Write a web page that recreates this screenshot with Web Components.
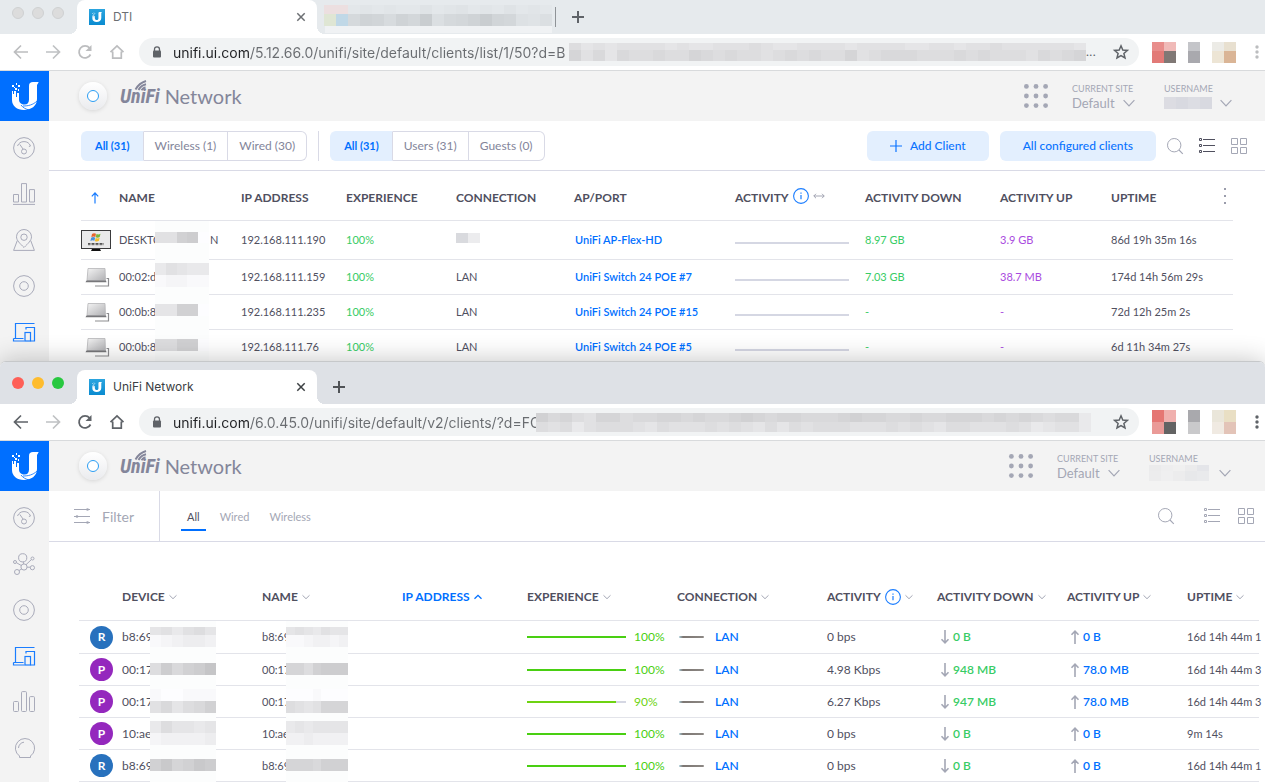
<!DOCTYPE html>
<html lang="en">
<head>
<meta charset="utf-8">
<meta name="viewport" content="width=device-width, initial-scale=1">
<title>UniFi Network</title>
<style>
  html { background: #fff; }
  body {
    margin: 0; min-height: 100vh; display: flex; flex-direction: column; overflow: hidden;
    font-family: Lato, "Open Sans", sans-serif; font-size: 12px; line-height: 16px; color: #50505f;
  }
  browser-window.front {
    flex: 1; margin-top: -4px; border-top: 1px solid #c6c8ca; border-radius: 6px 6px 0 0;
    box-shadow: 0 0 26px rgba(0, 0, 0, .24);
  }
</style>
</head>
<body>

<browser-window inactive tab-title="DTI" host="unifi.ui.com" path="/5.12.66.0/unifi/site/default/clients/list/1/50?d=B" ellipsis style="--url-width: 396px">
  <pixel-mosaic slot="tabs" style="--cell: 12px" heights="9,12,7"
    colors="#ecdfe0,#ecdfe0,#e3e7ea,#e1e5e8,#e3e7ea,#e1e5e8,#e3e7ea,#e3e7ea,#dfe3e6,#e3e7ea,#e1e5e8,#dfe3e6,#e3e7ea,#e1e5e8,#e3e7ea,#dfe3e6,#e3e7ea,#e1e5e8,#e3e7ea;#dfe6d4,#c0d8e7,#d5d9dc,#cfd3d6,#d1d5d8,#d7dbde,#cfd3d6,#d3d7da,#c9cdd0,#dbdfe2,#d5d9dc,#d3d7da,#cfd3d6,#c9cdd0,#d1d5d8,#d3d7da,#dde1e4,#dfe3e6,#dbdfe2;#f0f2f4,#f0f2f4,#f0f2f4,#f0f2f4,#f0f2f4,#f0f2f4,#f0f2f4,#f0f2f4,#f0f2f4,#f0f2f4,#f0f2f4,#f0f2f4,#f0f2f4,#f0f2f4,#f0f2f4,#f0f2f4,#f0f2f4,#f0f2f4,#f0f2f4"></pixel-mosaic>
  <pixel-mosaic slot="url" heights="7,11" shades="6878777787887776788777787777887787767777778;4758566566456566765656647655566656566675654"></pixel-mosaic>
  <pixel-mosaic slot="extensions" style="--cell: 12px" heights="9,12" colors="#e88d8b,#f0bab8;#e27a77,#807875"></pixel-mosaic>
  <pixel-mosaic slot="extensions" style="--cell: 12px" heights="9,12" colors="#c4c5c9;#a9a9ae"></pixel-mosaic>
  <pixel-mosaic slot="extensions" style="--cell: 12px" heights="9,12" colors="#ecebe6,#e8e0d0;#ede5d5,#dab596"></pixel-mosaic>

  <unifi-shell icons="gauge,chart,map,device,clients" current="clients">
    <pixel-mosaic slot="user" style="--cell: 12px" heights="12" colors="#dcdce2,#d8d9e0,#dcdde3,#d8d9e0"></pixel-mosaic>
    <classic-toolbar></classic-toolbar>
    <classic-table></classic-table>
  </unifi-shell>
</browser-window>

<browser-window class="front" tab-title="UniFi Network" host="unifi.ui.com" path="/6.0.45.0/unifi/site/default/v2/clients/?d=FC" style="--url-width: 363px">
  <pixel-mosaic slot="url" heights="9,10" shades="3546744655445455434544555434455455444545456559;6769766678677767678686766677767678667776798779"></pixel-mosaic>
  <pixel-mosaic slot="extensions" style="--cell: 12px" heights="12,12" colors="#e57673,#f0b0ae;#ea9a97,#636363"></pixel-mosaic>
  <pixel-mosaic slot="extensions" style="--cell: 12px" heights="12,12" colors="#a9a9ad;#c9c9cb"></pixel-mosaic>
  <pixel-mosaic slot="extensions" style="--cell: 12px" heights="12,12" colors="#eae6da,#e9dfc4;#f0eae2,#e3c4b8"></pixel-mosaic>

  <unifi-shell icons="gauge,topology,device,clients,bars,bulb" current="clients" style="--user-width: 82px">
    <pixel-mosaic slot="user" style="--cell: 12px" heights="6,10" colors="#ebebec,#eeeeef,#f0f0f0,#ebebec,#e4e5e9;#ececed,#efeff0,#ececed,#e7e8ea,#e9eaec"></pixel-mosaic>
    <modern-toolbar></modern-toolbar>
    <modern-table></modern-table>
  </unifi-shell>
</browser-window>

<script>
class ShadowElement extends HTMLElement {
  connectedCallback() {
    if (this.shadowRoot) return;
    this.attachShadow({ mode: "open" }).innerHTML = `<style>*{box-sizing:border-box}</style>` + this.render();
  }
}

const U_MARK = `<path d="M1 9v9c0 6 5 10 12 10s13-4 13-11V3l1.500-2.500V0H22c-2.500 0-4 1-4 4v13.500c0 3-1.500 5-4.500 5S8 21 8 17.500V11H6v4H5V9H3v3H2V9z"/><path d="M1 3h2v2H1zM4 6h2v2H4zM5 1h1v2H5zM7 3h2v2H7zM3 5h1v1H3zM7 7h1v2H7z"/>`;

const ICONS = {
  back: [16, `<path d="M15 8H2M8 1.500L1.500 8 8 14.500" stroke-width="1.700"/>`],
  forward: [16, `<path d="M1 8h13M8 1.500L14.500 8 8 14.500" stroke-width="1.700"/>`],
  reload: [16, `<path d="M13.500 10.500A6 6 0 1 1 12.600 4" stroke-width="1.800"/><path d="M14.500 1v6h-6z" fill="currentColor" stroke="none"/>`],
  home: [16, `<path d="M1.500 8.200L8 2l6.500 6.200M3.700 7.500v6.700h8.600V7.500" stroke-width="1.700"/>`],
  star: [16, `<path d="M8 1.800l1.800 4.200 4.600.4-3.500 3 1.100 4.500L8 11.500 4 13.900l1.100-4.500-3.500-3 4.600-.4z" stroke-width="1.500"/>`],
  lock: [12, `<path d="M3.500 5V3.400a2.500 2.500 0 0 1 5 0V5" stroke-width="1.300"/><rect x="2" y="4.600" width="8" height="6.900" rx="1" fill="currentColor" stroke="none"/>`],
  close: [10, `<path d="M1.300 1.300l7.400 7.400M8.700 1.300L1.300 8.700" stroke-width="1.500"/>`],
  plus: [12, `<path d="M6 0v12M0 6h12" stroke-width="2"/>`],
  plusthin: [12, `<path d="M6 0v12M0 6h12" stroke-width="1.200"/>`],
  more: [16, `<g fill="currentColor" stroke="none"><circle cx="8" cy="3" r="1.700"/><circle cx="8" cy="8" r="1.700"/><circle cx="8" cy="13" r="1.700"/></g>`],
  dots: [16, `<g fill="currentColor" stroke="none"><rect x="7" y="0" width="2" height="2"/><rect x="7" y="7" width="2" height="2"/><rect x="7" y="14" width="2" height="2"/></g>`],
  u: [28, `<g fill="currentColor" stroke="none">${U_MARK}</g><path d="M10 23c2 3 5 4 8 5M26 19c-4 4-9 5-14 5" stroke="#006fff" stroke-width=".8"/>`],
  apps: [24, `<g fill="currentColor" stroke="none">${[2.4, 12, 21.600].map(y => [2.4, 12, 21.600].map(x => `<circle cx="${x}" cy="${y}" r="2.400"/>`).join("")).join("")}</g>`],
  gauge: [22, `<circle cx="11" cy="11" r="10.400"/><circle cx="11" cy="14.500" r="2.500"/><path d="M10 12L6.800 7.400M4.500 9a7 7 0 0 1 13 0l-1.600.5"/>`],
  chart: [22, `<path d="M.5 19V11.500h5V19zM8.500 19V.6h5V19zM16.500 19V6.600h5V19zM0 21.400h22"/>`],
  bars: [22, `<rect x=".5" y="10.500" width="5" height="10" rx="1"/><rect x="8.500" y=".6" width="5" height="19.900" rx="1"/><rect x="16.500" y="5.600" width="5" height="14.900" rx="1"/>`],
  map: [22, `<path d="M11 18.500C7 14.500 3.500 11.500 3.500 7.800a7.500 7.300 0 0 1 15 0c0 3.700-3.500 6.700-7.500 10.700zM4.300 11.500L.6 21.400h20.800l-3.700-9.900"/><circle cx="11" cy="8.200" r="3.200"/>`],
  device: [22, `<circle cx="11" cy="11" r="10.400"/><circle cx="11" cy="11" r="4.300"/>`],
  clients: [22, `<path d="M2.500 17V2.500h19M.5 17.500h10M.5 17.500v2.500h11M13 8.500V6.500h8.500V20h-4" stroke-width="1.200"/><rect x="12" y="11.500" width="5.500" height="8.500" stroke-width="1.200"/>`],
  topology: [22, `<circle cx="9.700" cy="4.800" r="4.100"/><circle cx="11" cy="14" r="3.100"/><circle cx="2" cy="9" r="1.500"/><circle cx="19.500" cy="5.500" r="1.500"/><circle cx="19.400" cy="14.700" r="2.100"/><circle cx="4" cy="19" r="2.500"/><path d="M3.400 9.700L8.300 12.500M18.400 6.600L13 11.700M14.100 14.200h3.200M8.700 16L6 17.500M10.200 8.900l.4 2"/>`],
  bulb: [22, `<path d="M6.500 19a9.600 9.600 0 1 1 11 0v1.500h-11zM5.500 11a6 6 0 0 1 5.500-5.800"/>`],
  chevron: [12, `<path d="M.6 3.200L6 8.800l5.400-5.600" stroke-width="1.200"/>`],
  down: [8, `<path d="M.5 2.300L4 5.700l3.500-3.400"/>`],
  up: [8, `<path d="M.5 5.700L4 2.300l3.500 3.400" stroke-width="1.300"/>`],
  search: [16, `<circle cx="7.200" cy="7.200" r="6.700" stroke-width="1"/><path d="M12 12l3.800 3.800" stroke-width="1.100"/>`],
  list: [16, `<path d="M4 1.500h12M4 7.500h12M4 13.500h12M.5.5h2v2h-2zM.5 6.500h2v2h-2zM.5 12.500h2v2h-2z"/>`],
  grid: [16, `<path d="M.5.5h6v6h-6zM9.500.5h6v6h-6zM.5 9.500h6v6h-6zM9.500 9.500h6v6h-6z"/>`],
  filter: [16, `<path d="M0 1.500h16M0 8.500h16M0 14.500h16"/><g fill="currentColor" stroke="none"><circle cx="13.500" cy="1.500" r="1.300"/><circle cx="3" cy="8.500" r="1.300"/><circle cx="13.500" cy="14.500" r="1.300"/></g>`],
  info: [16, `<circle cx="8" cy="8" r="7.400" stroke-width="1.100"/><path d="M8 7v4.300M8 4.400v1.300" stroke-width="1.200"/>`],
  resize: [12, `<path d="M.8 6h10.400M3 3.800L.8 6 3 8.200M9 3.800L11.200 6 9 8.200" stroke-width=".9"/>`],
  sortup: [12, `<path d="M6 11.500V1M2.800 4.400L6 1l3.200 3.400" stroke-width="1.200"/>`],
  rise: [14, `<path d="M7 14V1.200M3.500 4.700L7 1.200l3.500 3.500" stroke-width="1.600"/>`],
  fall: [14, `<path d="M7 0v12.800M3.500 9.300L7 12.800l3.500-3.500" stroke-width="1.600"/>`],
  wifi: [16, `<path d="M3.500 9.500C6 5 9 2.500 14 1M6.500 10C8 7 10.500 5 14 4.200M9.500 10.200c1-1.700 2.400-2.700 4-3" stroke-width="1.900"/>`]
};

customElements.define("ui-icon", class extends ShadowElement {
  render() {
    const [size, body] = ICONS[this.getAttribute("name")];
    return `<style>
      :host { display: inline-flex; flex: none; width: ${size}px; height: ${size}px; }
      svg { width: 100%; height: 100%; fill: none; stroke: currentColor; overflow: visible; }
    </style><svg viewBox="0 0 ${size} ${size}" aria-hidden="true">${body}</svg>`;
  }
});

/* Blocks of flat colour that hide private text. */
customElements.define("pixel-mosaic", class extends ShadowElement {
  render() {
    const heights = (this.getAttribute("heights") || "12").split(",");
    const shades = this.getAttribute("shades");
    const rows = shades
      ? shades.split(";").map(r => [...r].map(c => { const v = 197 + parseInt(c, 16) * 4; return `rgb(${v},${v},${v + 2})`; }))
      : this.getAttribute("colors").split(";").map(r => r.split(","));
    return `<style>
      :host { display: flex; flex-direction: column; justify-content: center; flex: none; }
      div { display: flex; }
      i { flex: 1 0 var(--cell, 0px); }
    </style>` + rows.map((r, n) => `<div style="height:${heights[n]}px">${r.map(c => `<i style="background:${c}"></i>`).join("")}</div>`).join("");
  }
});

customElements.define("browser-window", class extends ShadowElement {
  render() {
    const a = n => this.getAttribute(n) || "";
    const dots = this.hasAttribute("ellipsis");
    return `<style>
      :host { display: flex; flex-direction: column; position: relative; overflow: clip; background: #fff;
        --strip: #dee1e6; --tool: #5f6368; --pale: #bfc1c3; --title: #3c4043; --edge: 8px;
        font-family: Inter, Roboto, sans-serif; }
      :host([inactive]) { --strip: #e6eaed; --tool: #bcbdbf; --title: #6c6f73; --edge: 0px; }
      .strip { display: flex; align-items: center; padding: var(--edge) 0 0 12px; background: var(--strip); color: var(--title); }
      .lights { display: flex; gap: 8px; align-self: flex-start; padding-top: 7px; }
      .lights button { width: 12px; height: 12px; padding: 0; border: 0; border-radius: 50%; }
      .close { background: #fe5f57; } .min { background: #febc2e; } .max { background: #28c840; }
      :host([inactive]) .lights button { background: #dcdcdc; border: 1px solid #cfd1d2; }
      .tab { position: relative; display: flex; align-items: center; gap: 8px; width: 240px; height: 34px; margin-left: 13px;
        padding: 0 11px 0 12px; border-radius: 8px 8px 0 0; background: #fff; font-size: 12px; }
      .tab::before, .tab::after { content: ""; position: absolute; bottom: 0; width: 8px; height: 8px; }
      .tab::before { right: 100%; background: radial-gradient(circle at 0 0, var(--strip) 8px, #fff 8px); }
      .tab::after { left: 100%; background: radial-gradient(circle at 100% 0, var(--strip) 8px, #fff 8px); }
      .tab span { flex: 1; }
      .fav { width: 16px; height: 16px; display: grid; place-items: center; background: linear-gradient(#2ba5df, #0a8bd0); color: #fff; }
      .fav svg { width: 10px; height: 10px; fill: currentColor; }
      button { border: 0; padding: 0; background: none; color: inherit; font: inherit; }
      .tab button, .add { display: grid; place-items: center; }
      .tab button { width: 10px; height: 10px; }
      .add { width: 12px; height: 12px; margin-left: 16px; color: #505357; }
      :host([inactive]) .add { color: #5f6368; }
      ::slotted([slot="tabs"]) { height: 28px; margin: 5px 0 1px 7px; }
      .rule { display: none; width: 1px; height: 20px; margin-left: 3px; background: #8f9397; }
      :host([inactive]) .rule { display: block; }
      .bar { display: flex; align-items: center; height: 37px; padding-left: 5px; border-bottom: 1px solid #d8dadc; color: var(--tool); }
      .bar > button { width: 32px; height: 32px; display: grid; place-items: center; }
      .bar > .off { color: var(--pale); }
      .omni { flex: 1; min-width: 0; display: flex; align-items: center; height: 28px; margin: 0 13px 0 6px; padding: 0 10px 0 12px; border-radius: 14px; background: #f1f3f4; color: #5f6368; }
      input { width: var(--url-width); height: 20px; margin-left: 10px; padding: 0; border: 0; outline: 0; font: 14px Inter, Roboto, sans-serif; color: #5f6368;
        background: linear-gradient(90deg, #202124 78px, #696c70 78px); -webkit-background-clip: text; background-clip: text; -webkit-text-fill-color: transparent; }
      .mask { flex: 1; min-width: 0; display: flex; align-items: center; }
      ::slotted([slot="url"]) { flex: 1; }
      .mask span { line-height: 18px; }
      .omni button { width: 16px; height: 16px; margin-left: 22px; }
      .mask.wide { margin-right: -5px; }
      .ext { display: flex; align-items: center; gap: 12px; }
      .bar > .menu { width: 16px; margin: 0 0 0 13px; }
    </style>
    <div class="strip">
      <div class="lights"><button class="close" aria-label="Close window"></button><button class="min" aria-label="Minimise"></button><button class="max" aria-label="Full screen"></button></div>
      <div class="tab"><i class="fav"><svg viewBox="0 0 28 28">${U_MARK}</svg></i><span>${a("tab-title")}</span><button aria-label="Close tab"><ui-icon name="close"></ui-icon></button></div>
      <slot name="tabs"></slot><i class="rule"></i>
      <button class="add" aria-label="New tab"><ui-icon name="plus"></ui-icon></button>
    </div>
    <div class="bar">
      <button aria-label="Back"><ui-icon name="back"></ui-icon></button>
      <button class="off" aria-label="Forward"><ui-icon name="forward"></ui-icon></button>
      <button aria-label="Reload"><ui-icon name="reload"></ui-icon></button>
      <button aria-label="Home"><ui-icon name="home"></ui-icon></button>
      <div class="omni"><ui-icon name="lock"></ui-icon>
        <input aria-label="Address" value="${a("host")}${a("path")}">
        <div class="mask${dots ? " wide" : ""}"><slot name="url"></slot>${dots ? "<span>...</span>" : ""}</div>
        <button aria-label="Bookmark"><ui-icon name="star"></ui-icon></button></div>
      <div class="ext"><slot name="extensions"></slot></div>
      <button class="menu" aria-label="Menu"><ui-icon name="more"></ui-icon></button>
    </div>
    <slot></slot>`;
  }
});

customElements.define("unifi-shell", class extends ShadowElement {
  render() {
    const current = this.getAttribute("current");
    const nav = this.getAttribute("icons").split(",").map(n =>
      `<a href="#${n}" aria-label="${n}" ${n === current ? 'class="on"' : ""}><ui-icon name="${n}"></ui-icon></a>`).join("");
    return `<style>
      :host { flex: 1; display: grid; grid-template: 50px 1fr / 49px minmax(0, 1fr); font-family: Lato, sans-serif; color: #50505f; }
      .logo { display: grid; place-items: center; background: #006fff; color: #fff; }
      header { display: flex; align-items: center; padding: 0 34px 0 30px; background: #f3f3f3; }
      .badge { width: 28px; height: 28px; display: grid; place-items: center; border-radius: 50%; background: linear-gradient(#fff, #eaebee); box-shadow: 0 1px 4px rgba(0,0,0,.12); }
      .badge i { width: 12px; height: 12px; border: 1px solid #2a9df4; border-radius: 50%; background: #fff; }
      h1 { position: relative; display: flex; align-items: center; gap: 5px; margin: 0 auto 0 13px; font-weight: 400; font-size: 20px; line-height: 28px; color: #84869a; }
      h1 b { font: italic 700 20px/28px "Liberation Sans Narrow", "Roboto Condensed", Lato, sans-serif; }
      h1 ui-icon { position: absolute; left: 12px; top: -2px; }
      .apps { display: grid; width: 24px; height: 24px; margin-right: 24px; padding: 0; border: 0; background: none; color: #a4a7b5; }
      .menu { display: flex; flex-direction: column; color: #a4a7b5; font-size: 13px; line-height: 16px; }
      .menu > label, .menu > span { font-size: 9px; line-height: 13px; }
      select { appearance: none; height: 16px; margin: 0; padding: 0 20px 0 0; border: 0; font: inherit; line-height: 16px; color: inherit;
        background: url("data:image/svg+xml,%3Csvg xmlns='http://www.w3.org/2000/svg' width='12' height='12' fill='none' stroke='%23a4a7b5' stroke-width='1.2'%3E%3Cpath d='M.6 3.200L6 8.800l5.400-5.600'/%3E%3C/svg%3E") no-repeat right center; }
      .user { display: flex; align-items: center; justify-content: space-between; gap: 8px; width: var(--user-width, 67px); height: 16px; padding: 0; border: 0; background: none; color: inherit; }
      .account { margin-left: 29px; }
      nav { display: flex; flex-direction: column; padding-top: 4px; background: #f3f3f3; }
      nav a { display: grid; place-items: center; height: 46px; padding-right: 1px; color: #a9abba; }
      nav a.on { color: #1a7dff; }
      main { min-width: 0; background: #fff; }
    </style>
    <a class="logo" href="#home" aria-label="Ubiquiti"><ui-icon name="u"></ui-icon></a>
    <header>
      <span class="badge"><i></i></span>
      <h1><b>UniFi</b><ui-icon name="wifi"></ui-icon><span>Network</span></h1>
      <button class="apps" aria-label="Apps"><ui-icon name="apps"></ui-icon></button>
      <div class="menu"><label for="site">CURRENT SITE</label><select id="site"><option>Default</option></select></div>
      <div class="menu account"><span id="who">USERNAME</span><button class="user" aria-labelledby="who"><slot name="user"></slot><ui-icon name="chevron"></ui-icon></button></div>
    </header>
    <nav>${nav}</nav>
    <main><slot></slot></main>`;
  }
});

/* A joined row of choices; one is pressed. */
customElements.define("segment-group", class extends ShadowElement {
  render() {
    const items = this.getAttribute("items").split("|");
    return `<style>
      :host { display: inline-flex; }
      button { height: 30px; padding: 0 11px; border: 1px solid #d9dae6; border-left-width: 0; background: #fff; font: 12px Lato, sans-serif; color: #83859a; }
      button:first-of-type { border-color: #e3effe; border-right-color: #d9dae6; border-left-width: 1px; border-radius: 6px 0 0 6px; background: #e3effe; font-size: 11px; font-weight: 700; padding: 0 13px; color: #006fff; }
      button:last-of-type { border-radius: 0 6px 6px 0; }
    </style>` + items.map((t, i) => `<button aria-pressed="${i === 0}">${t}</button>`).join("");
  }
});

customElements.define("classic-toolbar", class extends ShadowElement {
  render() {
    return `<style>
      :host { display: flex; align-items: center; height: 49px; padding: 0 18px 0 32px; border-bottom: 1px solid #d9dae6; }
      .rule { width: 1px; height: 30px; margin: 0 11px; background: #d9dae6; }
      .space { flex: 1; }
      .cta { display: flex; align-items: center; gap: 8px; height: 30px; margin-right: 11px; padding: 0 23px; border: 0; border-radius: 6px; background: #e3effe; font: 500 12px Lato, sans-serif; color: #0a73ff; }
      .tool { padding: 0; border: 0; background: none; height: 16px; color: #a4a7b5; }
      .tool + .tool { margin-left: 16px; }
      .on { color: #50505f; }
    </style>
    <segment-group items="All (31)|Wireless (1)|Wired (30)"></segment-group><i class="rule"></i>
    <segment-group items="All (31)|Users (31)|Guests (0)"></segment-group><span class="space"></span>
    <button class="cta"><ui-icon name="plusthin"></ui-icon>Add Client</button>
    <button class="cta">All configured clients</button>
    <button class="tool" aria-label="Search"><ui-icon name="search"></ui-icon></button>
    <button class="tool on" aria-label="List"><ui-icon name="list"></ui-icon></button>
    <button class="tool" aria-label="Grid"><ui-icon name="grid"></ui-icon></button>`;
  }
});

customElements.define("modern-toolbar", class extends ShadowElement {
  render() {
    return `<style>
      :host { display: flex; align-items: center; height: 50px; padding-right: 11px; border-bottom: 1px solid #d9dae6; }
      button { padding: 0; border: 0; background: none; font: 11px Lato, sans-serif; color: #a4a7b5; }
      .filter { display: flex; align-items: center; gap: 12px; width: 111px; height: 50px; padding-left: 25px; border-right: 1px solid #d9dae6; font-size: 14px; }
      .tabs { display: flex; flex: 1; gap: 8px; margin-left: 21px; }
      .tabs button { height: 28px; padding: 0 6px; border-bottom: 2px solid transparent; margin-top: 2px; }
      .tabs .on { border-color: #006fff; color: #50505f; }
      .tool { height: 16px; margin-left: 18px; }
      .search { margin-right: 12px; }
    </style>
    <button class="filter"><ui-icon name="filter"></ui-icon>Filter</button>
    <div class="tabs"><button class="on">All</button><button>Wired</button><button>Wireless</button></div>
    <button class="tool search" aria-label="Search"><ui-icon name="search"></ui-icon></button>
    <button class="tool" aria-label="List"><ui-icon name="list"></ui-icon></button>
    <button class="tool" aria-label="Grid"><ui-icon name="grid"></ui-icon></button>`;
  }
});

/* Small picture of the kind of machine behind a client. */
customElements.define("machine-picture", class extends ShadowElement {
  render() {
    const pc = `<rect x=".5" y=".5" width="29" height="18" fill="#e9e9ea" stroke="#3a3a3c"/><path d="M11 19h8l1 2H10z" fill="#111"/>
      <path d="M11 4q2-1.500 4-.2L14.300 7q-2-1-4 .2z" fill="#e8642c"/><path d="M15.500 4q2 1 4-.2L18.700 7q-2 1.200-4 .2z" fill="#79b63b"/><path d="M10.200 7.700q2-1.200 4 0l-.8 3.100q-2-1-4 .2z" fill="#4a90d9"/><path d="M14.700 8q2 1 4-.2l-.8 3q-2 1.300-4 .2z" fill="#f5bd2b"/><path d="M7 13.500h16M7 14.700h16" stroke="#555" stroke-width="1" stroke-dasharray="2 .5 1 .5"/>`;
    const laptop = `<defs><linearGradient id="s" x2="1" y2="1"><stop stop-color="#f4f4f4"/><stop offset="1" stop-color="#b0b0b3"/></linearGradient></defs>
      <path d="M7 1.500h17l.5 12H6z" fill="url(#s)" stroke="#b5b5b8" stroke-width=".8"/><path d="M5.500 13.500H25l.5 1.800H4.500z" fill="#77777a"/><path d="M25.500 11.500h2v7.500H14" fill="none" stroke="#8d8d90" stroke-width="1.200"/>`;
    return `<style>:host { display: block; width: 30px; height: 21px; } svg { display: block; width: 30px; height: 21px; }</style>
      <svg viewBox="0 0 30 21" aria-hidden="true">${this.getAttribute("kind") === "pc" ? pc : laptop}</svg>`;
  }
});

const TABLE_STYLE = `
  table { width: 100%; table-layout: fixed; border-collapse: separate; border-spacing: 0; }
  th, td { position: relative; padding: 0; border-bottom: 1px solid #e3e4ea; text-align: left; white-space: nowrap; vertical-align: middle; line-height: 16px; }
  th { font-size: 12px; font-weight: 700; color: #50505f; }
  a { color: #006fff; text-decoration: none; }
  .name { display: block; }
  pixel-mosaic { position: absolute; top: 0; bottom: -1px; background: #fcfdfd; }
  .flex { display: flex; align-items: center; }`;

customElements.define("classic-table", class extends ShadowElement {
  render() {
    const rows = [
      ["pc", "DESKTO", "192.168.111.190", "", "UniFi AP-Flex-HD", "8.97 GB", "3.9 GB", "86d 19h 35m 16s", "7732e", "11"],
      ["laptop", "00:02:d", "192.168.111.159", "LAN", "UniFi Switch 24 POE #7", "7.03 GB", "38.7 MB", "174d 14h 56m 29s", "97899;dccdd", "12,12"],
      ["laptop", "00:0b:8", "192.168.111.235", "LAN", "UniFi Switch 24 POE #15", "-", "-", "72d 12h 25m 2s", "8833e", "12"],
      ["laptop", "00:0b:8", "192.168.111.76", "LAN", "UniFi Switch 24 POE #5", "-", "-", "6d 11h 34m 27s", "6633e", "12"]
    ];
    return `<style>${TABLE_STYLE}
      :host { display: block; padding: 0 32px; font-size: 11px; }
      th { height: 50px; padding-top: 4px; }
      td { height: 35px; }
      tr:first-child td { height: 39px; }
      td a { padding-left: 1px; font-weight: 600; }
      .name { width: 38px; }
      td pixel-mosaic { left: 36px; width: 54px; padding-bottom: 6px; }
      .tail { margin-left: 49px; }
      .line { display: block; width: 114px; height: 2px; margin-top: 6px; background: #d5d7e3; }
      .good { color: #38cc65; } .up { color: #a94be0; }
      .flex { gap: 4px; }
      .flex ui-icon { margin-top: -3px; }
      ui-icon.blue { color: #1a7dff; } ui-icon.pale { color: #9a9cab; }
      .lan { display: flex; width: 24px; height: 10px; margin-top: -5px; }
      .lan i { flex: 1; background: #d9dade; } .lan i + i { background: #ececee; }
      .sort { margin-left: 8px; display: inline-flex; vertical-align: middle; }
    </style>
    <table>
      <colgroup>${[38, 122, 105, 110, 118, 161, 130, 135, 111, 106].map(w => `<col style="width:${w}px">`).join("")}<col></colgroup>
      <thead><tr><th><ui-icon class="blue sort" name="sortup"></ui-icon></th><th>NAME</th><th>IP ADDRESS</th><th>EXPERIENCE</th><th>CONNECTION</th><th>AP/PORT</th>
        <th><span class="flex">ACTIVITY <ui-icon class="blue" name="info"></ui-icon><ui-icon class="pale" name="resize"></ui-icon></span></th>
        <th>ACTIVITY DOWN</th><th>ACTIVITY UP</th><th>UPTIME</th><th><ui-icon class="pale" name="dots"></ui-icon></th></tr></thead>
      <tbody>${rows.map(r => `<tr>
        <td><machine-picture kind="${r[0]}"></machine-picture></td>
        <td><span class="flex"><span class="name">${r[1]}</span>${r[0] === "pc" ? '<span class="tail">N</span>' : ""}</span><pixel-mosaic shades="${r[8]}" heights="${r[9]}"></pixel-mosaic></td>
        <td>${r[2]}</td><td class="good">100%</td>
        <td>${r[3] || '<span class="lan"><i></i><i></i></span>'}</td>
        <td><a href="#device">${r[4]}</a></td><td><i class="line"></i></td>
        <td class="good">${r[5]}</td><td class="up">${r[6]}</td><td>${r[7]}</td><td></td></tr>`).join("")}</tbody>
    </table>`;
  }
});

customElements.define("modern-table", class extends ShadowElement {
  render() {
    const rows = [
      ["R", "b8:69", 100, "0 bps", "0 B", "0 B", "16d 14h 44m 1", "879768;dcbaab", "8789788;ddcbbcb", "8,12"],
      ["P", "00:17", 100, "4.98 Kbps", "948 MB", "78.0 MB", "16d 14h 44m 3", "625320", "4463222", "12"],
      ["P", "00:17", 90, "6.27 Kbps", "947 MB", "78.0 MB", "16d 14h 44m 3", "deeddd;758653", "eeedeee;6787444", "12,12"],
      ["P", "10:ae", 100, "0 bps", "0 B", "0 B", "9m 14s", "968898;cbbbba", "9898888;bbabbbb", "12,12"],
      ["R", "b8:69", 100, "0 bps", "0 B", "0 B", "16d 14h 44m 1", "314312", "4445333", "12"]
    ];
    const heads = [["DEVICE", 2], ["NAME"], ["IP ADDRESS"], ["EXPERIENCE"], ["CONNECTION"], ["ACTIVITY"], ["ACTIVITY DOWN"], ["ACTIVITY UP"], ["UPTIME"]];
    return `<style>${TABLE_STYLE}
      :host { display: block; padding: 32px 6px 0 30px; font-size: 12px; }
      th { height: 47px; }
      th:first-child { padding-left: 43px; }
      th .flex { gap: 4px; color: inherit; }
      th ui-icon { color: #a4a7b5; }
      th .info { color: #1a7dff; }
      th.on, th.on ui-icon { color: #006fff; }
      td { height: 32px; }
      tr:first-child td { height: 33px; }
      td.s { font-size: 11px; }
      .avatar { display: grid; place-items: center; width: 23px; height: 23px; margin-left: 11px; border-radius: 50%; background: #9428bd; font-size: 12px; font-weight: 700; color: #fff; }
      .avatar.R { background: #2871bd; }
      .name { width: 30px; }
      .m pixel-mosaic { left: 28px; width: 66px; padding-bottom: 2px; }
      .m + .m pixel-mosaic { left: 24px; width: 62px; }
      .exp { gap: 8px; color: #49cf12; }
      .bar { width: 99px; height: 2px; background: #d5d7e3; }
      .bar i { display: block; height: 2px; background: #49cf12; }
      .w90 { color: #6ed312; } .w90 i { width: 90%; background: #6ed312; }
      .conn { gap: 11px; margin-left: 2px; }
      .conn a, .flow { font-weight: 600; }
      .cable { width: 25px; height: 2px; background: linear-gradient(90deg, #a9cbd6, #7d7672 4px, #8c8884); border-radius: 1px; }
      .flow { gap: 1px; margin-left: 1px; }
      .flow ui-icon { color: #a4a7b5; }
      .down { color: #38cc65; } .up { color: #006fff; }
    </style>
    <table>
      <colgroup>${[43, 140, 140, 125, 150, 150, 110, 130, 120].map(w => `<col style="width:${w}px">`).join("")}<col></colgroup>
      <thead><tr>${heads.map(([t, span]) => `<th${span ? ' colspan="2"' : ""}${t === "IP ADDRESS" ? ' class="on" aria-sort="ascending"' : ""}><span class="flex">${t}${t === "ACTIVITY" ? '<ui-icon class="info" name="info"></ui-icon>' : ""}<ui-icon name="${t === "IP ADDRESS" ? "up" : "down"}"></ui-icon></span></th>`).join("")}</tr></thead>
      <tbody>${rows.map(r => `<tr>
        <td><span class="avatar ${r[0]}">${r[0]}</span></td>
        <td class="m"><span class="name">${r[1]}</span><pixel-mosaic shades="${r[7]}" heights="${r[9]}"></pixel-mosaic></td>
        <td class="m s"><span class="name">${r[1]}</span><pixel-mosaic shades="${r[8]}" heights="${r[9]}"></pixel-mosaic></td>
        <td></td>
        <td><span class="flex exp w${r[2]}"><span class="bar"><i></i></span>${r[2]}%</span></td>
        <td><span class="flex conn"><i class="cable"></i><a href="#lan">LAN</a></span></td>
        <td>${r[3]}</td>
        <td><span class="flex flow down"><ui-icon name="fall"></ui-icon>${r[4]}</span></td>
        <td><span class="flex flow up"><ui-icon name="rise"></ui-icon>${r[5]}</span></td>
        <td class="s">${r[6]}</td></tr>`).join("")}</tbody>
    </table>`;
  }
});
</script>
</body>
</html>
